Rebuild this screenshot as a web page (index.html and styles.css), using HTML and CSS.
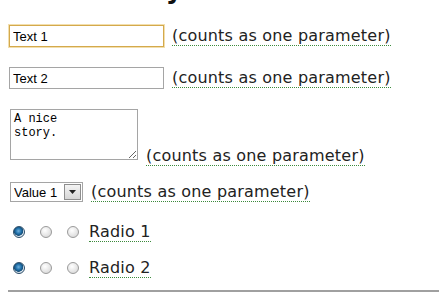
FILE: index.html
```html
<!DOCTYPE html>
<html lang="en">
<head>
    <meta charset="UTF-8">
    <title>Parameters</title>
    <link rel="stylesheet" href="styles.css">
</head>
<body>

    <h2 class="title">Story</h2>

    <form class="params">
        <div class="row">
            <input type="text" class="field focused" value="Text 1">
            <span class="hint">(counts as one parameter)</span>
        </div>
        <div class="row">
            <input type="text" class="field" value="Text 2">
            <span class="hint">(counts as one parameter)</span>
        </div>
        <div class="row row-bottom">
            <textarea class="story">A nice
story.</textarea>
            <span class="hint">(counts as one parameter)</span>
        </div>
        <div class="row">
            <span class="combo">
                <select class="pick">
                    <option>Value 1</option>
                    <option>Value 2</option>
                </select>
                <span class="combo-btn">
                    <svg width="7" height="4" viewBox="0 0 7 4"><path d="M0 0h7L3.5 4z" fill="#222"/></svg>
                </span>
            </span>
            <span class="hint">(counts as one parameter)</span>
        </div>
        <div class="row radios">
            <input type="radio" name="r1" class="radio" checked>
            <input type="radio" name="r1" class="radio">
            <input type="radio" name="r1" class="radio">
            <span class="hint">Radio 1</span>
        </div>
        <div class="row radios">
            <input type="radio" name="r2" class="radio" checked>
            <input type="radio" name="r2" class="radio">
            <input type="radio" name="r2" class="radio">
            <span class="hint">Radio 2</span>
        </div>
    </form>

    <hr class="rule">

</body>
</html>
```

FILE: styles.css
```css
body {
    margin: 0 0 0 8px;
    font-family: "DejaVu Sans", Verdana, sans-serif;
    color: #222;
    background: #fff;
    overflow: hidden;
}
.title {
    font-size: 26px;
    font-weight: bold;
    line-height: 30px;
    margin: -26px 0 0 96px;
    color: #111;
}
.params {
    margin: 21px 0 0 0;
}
.row {
    display: flex;
    align-items: center;
    margin-bottom: 20px;
}
.row-bottom {
    align-items: flex-end;
    margin-bottom: 16px;
}
.hint {
    font-size: 16px;
    line-height: 19px;
    letter-spacing: 0.2px;
    border-bottom: 1px dotted #3c8a3c;
    margin-left: 8px;
}
.field {
    box-sizing: border-box;
    width: 155px;
    height: 22px;
    margin: 0 0 0 1px;
    padding: 2px 3px;
    border: 1px solid #a5a5a5;
    font-family: "Liberation Sans", Arial, sans-serif;
    font-size: 13px;
    color: #000;
    outline: none;
}
.focused {
    border-color: #d4a94c;
    box-shadow: 0 0 0 1px #f2dfae;
}
.story {
    box-sizing: border-box;
    width: 128px;
    height: 51px;
    margin: 0 0 6px 2px;
    padding: 2px 3px;
    border: 1px solid #a5a5a5;
    font-family: "Liberation Mono", monospace;
    font-size: 12px;
    line-height: 14px;
    color: #000;
    resize: both;
}
.combo {
    display: inline-flex;
    align-items: stretch;
    height: 20px;
    margin-left: 2px;
    border: 1px solid #a5a5a5;
    box-sizing: border-box;
}
.pick {
    appearance: none;
    border: none;
    outline: none;
    background: #fff;
    padding: 0 2px 0 3px;
    font-family: "Liberation Sans", Arial, sans-serif;
    font-size: 13px;
    color: #000;
    width: 52px;
}
.combo-btn {
    width: 15px;
    margin: 1px;
    border: 1px solid #8e8e8e;
    background: linear-gradient(#f4f4f4, #d6d6d6);
    display: flex;
    align-items: center;
    justify-content: center;
}
.radios {
    height: 20px;
    margin-bottom: 16px;
}
.radio {
    appearance: none;
    box-sizing: border-box;
    width: 12px;
    height: 12px;
    margin: 0 15px 0 5px;
    border: 1px solid #9a9a9a;
    border-radius: 50%;
    background: radial-gradient(circle at 40% 35%, #ffffff 0, #e6e6e6 55%, #cfcfcf 100%);
}
.radio + .radio {
    margin-left: 0;
}
.radio:nth-of-type(3) {
    margin-right: 2px;
}
.radio:checked {
    border-color: #2c4d68;
    background: radial-gradient(circle at 45% 40%, #6fb0dd 0, #1f6fa8 35%, #164e78 55%, #dfe9f1 62%, #c9d6e0 100%);
}
.rule {
    margin: 0;
    border: none;
    border-top: 2px solid #a0a0a0;
    position: absolute;
    left: 8px;
    right: 0;
    top: 290px;
}
```
